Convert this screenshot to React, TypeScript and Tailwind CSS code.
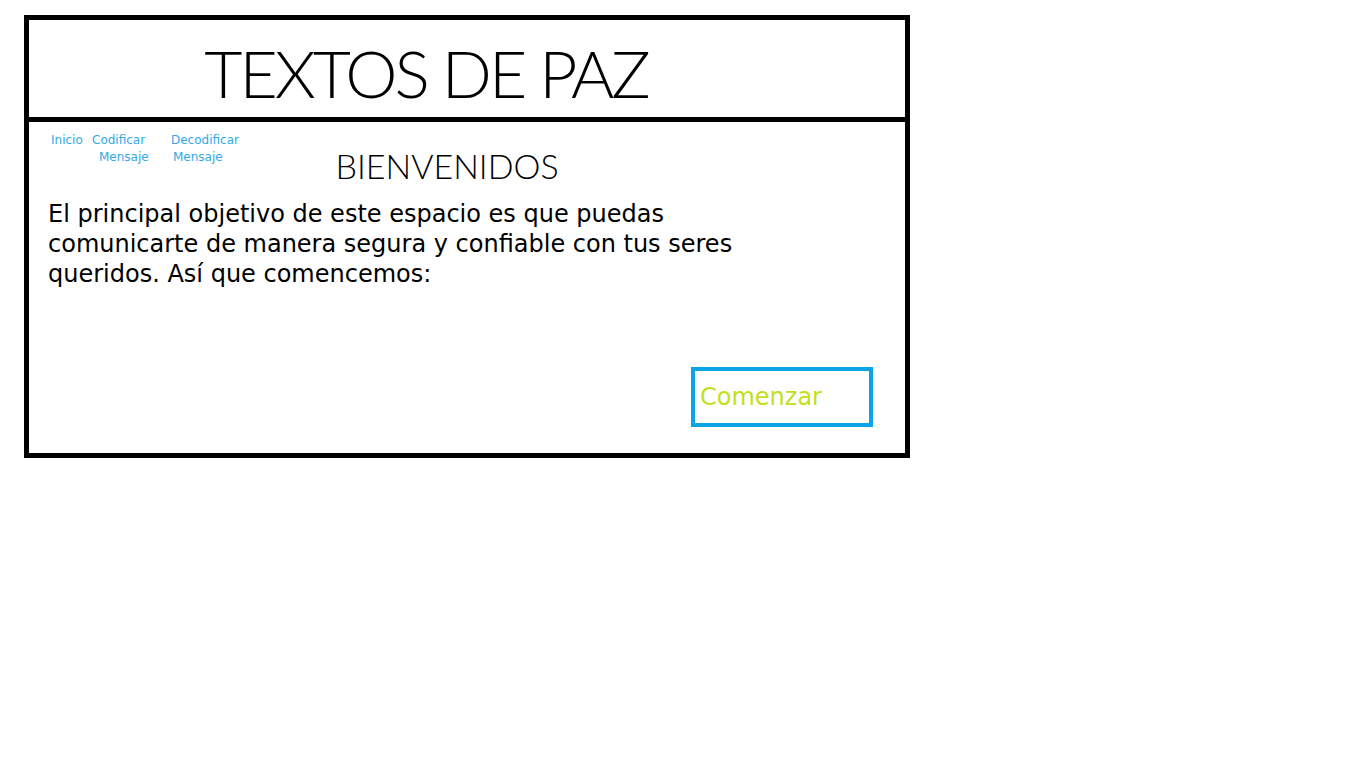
const font = { fontFamily: '"DejaVu Sans", "Liberation Sans", sans-serif' }
const light = { fontFamily: '"Lato", "Liberation Sans", sans-serif' }

function Nav() {
	return (
		<ul className="flex items-start text-[12px] leading-[17px] text-[#33a9e6] pt-[10px] pl-[22px] w-[220px]">
			<li className="w-[41px]">Inicio</li>
			<li className="flex flex-col items-start w-[79px]">
				<span>Codificar</span>
				<span className="pl-[7px]">Mensaje</span>
			</li>
			<li className="flex flex-col items-start">
				<span>Decodificar</span>
				<span className="pl-[2px]">Mensaje</span>
			</li>
		</ul>
	)
}

export default function App() {
	return (
		<div className="pt-[15px] pl-[24px] bg-white min-h-screen" style={font}>
			<div className="w-[886px] h-[443px] border-[5px] border-black flex flex-col">
				<header className="h-[102px] border-b-[5px] border-black flex items-center justify-center pr-[82px] pt-[8px]">
					<h1 className="text-[66px] leading-none font-light tracking-[-3px] text-black" style={light}>TEXTOS DE PAZ</h1>
				</header>
				<main className="flex-1 flex flex-col">
					<div className="flex">
						<Nav />
						<h2 className="flex-1 text-center pr-[260px] pt-[27px] text-[34px] leading-none font-light text-black" style={light}>BIENVENIDOS</h2>
					</div>
					<p className="pl-[19px] pt-[16px] text-[24px] leading-[30px] text-black">
						El principal objetivo de este espacio es que puedas<br />
						comunicarte de manera segura y confiable con tus seres<br />
						queridos. Así que comencemos:
					</p>
					<div className="flex-1 flex items-end justify-end pr-[32px] pb-[26px]">
						<button className="w-[182px] h-[60px] border-[4px] border-[#0aa5e6] text-left pl-[5px] text-[24px] text-[#c2e01c]">
							Comenzar
						</button>
					</div>
				</main>
			</div>
		</div>
	)
}
